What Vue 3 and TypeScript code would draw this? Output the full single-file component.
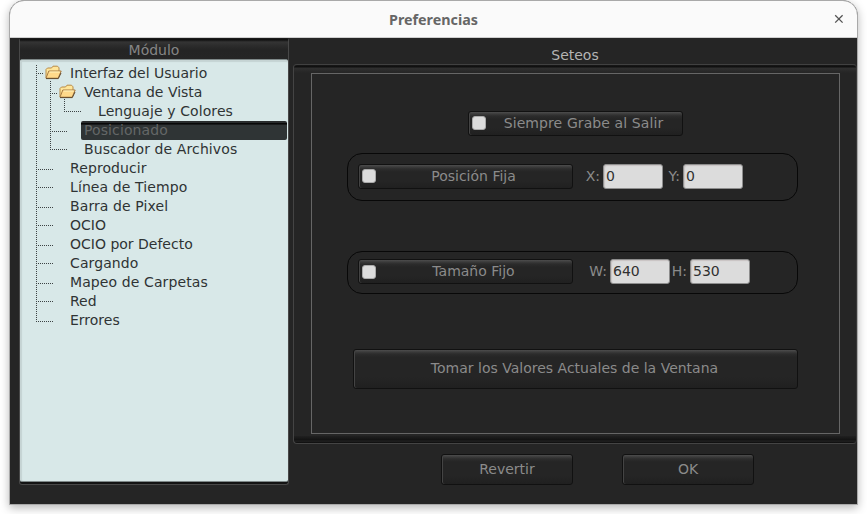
<script setup lang="ts">
interface TreeItem {
  label: string
  level: number
  folder?: boolean
  selected?: boolean
  wide?: boolean
}

const items: TreeItem[] = [
  { label: 'Interfaz del Usuario', level: 0, folder: true },
  { label: 'Ventana de Vista', level: 1, folder: true },
  { label: 'Lenguaje y Colores', level: 2, wide: true },
  { label: 'Posicionado', level: 1, selected: true, wide: true },
  { label: 'Buscador de Archivos', level: 1, wide: true },
  { label: 'Reproducir', level: 0, wide: true },
  { label: 'Línea de Tiempo', level: 0, wide: true },
  { label: 'Barra de Pixel', level: 0, wide: true },
  { label: 'OCIO', level: 0 },
  { label: 'OCIO por Defecto', level: 0 },
  { label: 'Cargando', level: 0, wide: true },
  { label: 'Mapeo de Carpetas', level: 0, wide: true },
  { label: 'Red', level: 0 },
  { label: 'Errores', level: 0 },
]

// Dotted connectors: one stub per row, plus one trunk per nesting level.
const stubs = items.map((item, i) => {
  const y = 13 + 19 * i + (i === 2 || i === 4 ? 0 : i % 2)
  return `M${16 + item.level * 14} ${y + 0.5}h${item.folder ? 8 : 18}`
})
const lines = ['M16.5 5v257', 'M30.5 21v69', 'M44.5 39v13', ...stubs].join('')

const groups = [
  { id: 'pos', title: 'Posición Fija', fields: [{ k: 'X:', v: '0' }, { k: 'Y:', v: '0' }] },
  { id: 'size', title: 'Tamaño Fijo', fields: [{ k: 'W:', v: '640' }, { k: 'H:', v: '530' }] },
]
</script>

<template>
  <div class="window">
    <header class="titlebar">
      <span class="title">Preferencias</span>
      <svg class="close" width="10" height="10" viewBox="0 0 10 10"><path d="M1.2 1.2 8.6 8.6M8.6 1.2 1.2 8.6" /></svg>
    </header>
    <main class="body">
      <aside class="side">
        <div class="side-head">Módulo</div>
        <div class="tree">
          <svg class="lines" width="100" height="270"><path :d="lines" /></svg>
          <div v-for="item in items" :key="item.label" class="row" :class="['l' + item.level, { selected: item.selected, wide: item.wide }]">
            <span class="slot">
              <svg v-if="item.folder" width="17" height="15" viewBox="0 0 17 15">
                <path d="M1 13V4.5L2.5 3h4L8 1.2h4.5L14 2.8V6" fill="#ffe69a" stroke="#b98a45" />
                <path d="M1 13.2 3.8 6H16.2L13.2 13.2z" fill="#ffd98a" stroke="#a87a42" />
                <path d="M4.5 7H14.7" stroke="#fff3bd" />
                <path d="M1 13.6H13.3L16 8" fill="none" stroke="#60482b" />
              </svg>
            </span>
            <span class="name">{{ item.label }}</span>
          </div>
        </div>
      </aside>
      <section class="content">
        <div class="heading">Seteos</div>
        <div class="panel">
          <div class="inner">
            <button class="btn check save"><i class="box"></i><span>Siempre Grabe al Salir</span></button>
            <div v-for="g in groups" :key="g.id" class="group" :class="g.id">
              <button class="btn check"><i class="box"></i><span>{{ g.title }}</span></button>
              <label v-for="f in g.fields" :key="f.k" class="field"><span>{{ f.k }}</span><input :value="f.v" /></label>
            </div>
            <button class="btn take">Tomar los Valores Actuales de la Ventana</button>
          </div>
        </div>
        <footer class="actions">
          <button class="btn">Revertir</button>
          <button class="btn">OK</button>
        </footer>
      </section>
    </main>
  </div>
</template>

<style>
html { background: #fff; }
body { margin: 0; height: 514px; overflow: hidden; }
</style>

<style scoped>
* { box-sizing: border-box; }
.window {
  width: 849px; height: 505px; margin-left: 9px;
  border: 1px solid #a9a9a9; border-radius: 15px 15px 0 0;
  background: #252525; overflow: hidden;
  box-shadow: 0 3px 10px rgba(0, 0, 0, .28);
  font: 14px/19px "DejaVu Sans", sans-serif; color: #8b8b8b;
}
.titlebar {
  height: 37px; background: #fafafa; border-bottom: 1px solid #cfcfcf;
  display: grid; grid-template-columns: 1fr auto 1fr; align-items: center;
}
.title { grid-column: 2; font: bold 14.3px/18px "Noto Sans", sans-serif; color: #666; padding-top: 1px; }
.close { justify-self: end; margin-right: 13px; fill: none; stroke: #555; stroke-width: 1.3; }
.body { display: flex; height: 466px; }
.side { width: 270px; height: 447px; margin-left: 9px; flex: none; border: 1px solid #484848; border-top-color: #1a1a1a; border-radius: 3px; background: #131313; }
.side-head {
  height: 20px; text-align: center; line-height: 20px; color: #858585;
  border-top: 1px solid #101010;
  background: linear-gradient(#131313, #343434 2px, #2b2b2b 6px, #242424 10px, #252525);
}
.tree {
  position: relative; height: 423px; padding-top: 4px;
  background: #d8e8e8; border: 1px solid #7e8888; border-width: 1px 0; border-radius: 2px;
  box-shadow: inset 0 2px 1px #c5d3d3, inset 2px 0 1px #c5d3d3;
  color: #2f3334;
}
.lines { position: absolute; left: 0; top: 0; fill: none; stroke: #3c4243; stroke-dasharray: 1 1; }
.lines path { shape-rendering: crispEdges; }
.row { position: relative; display: flex; height: 19px; line-height: 18px; white-space: nowrap; }
.wide { letter-spacing: .1px; }
.slot { width: 24px; margin-left: 25px; height: 19px; flex: none; }
.l1 .slot { margin-left: 39px; }
.l2 .slot { margin-left: 53px; }
.l1 .slot, .l2 .slot { width: 22px; }
.slot svg { display: block; margin-top: 1px; fill: none; }
.name { padding-left: 3px; }
.l0 .name { padding-left: 1px; }
.selected .name {
  flex: 1; margin-right: 1px; color: #646767; border-radius: 2px;
  background: linear-gradient(#292c2d 0 2px, #080808 2px 3px, #181a1b 3px 4px, #2f3435 4px);
}
.content { flex: 1; margin-left: 4px; }
.heading { height: 26px; line-height: 34px; text-align: center; color: #b4b4b4; }
.panel {
  height: 380px; padding: 8px 16px 8px 17px;
  border: 1px solid #444; border-right-color: #383838; border-top-color: #414141; border-radius: 4px;
  background:
    linear-gradient(#191919, #0e0e0e 2px, #303030 3px, #252525 8px) top / 100% 8px no-repeat,
    linear-gradient(#202020, #121212 4px, #222 5px, #0c0c0c 7px) bottom / 100% 7px no-repeat;
}
.inner { height: 361px; border: 1px solid #666; padding: 37px 40px 0 35px; }
.btn {
  display: block; padding: 0; border: 1px solid #111; border-radius: 3px; color: #8b8b8b;
  font: inherit; text-align: center;
  background: linear-gradient(#4d4d4d, #3a3a3a 2px, #2c2c2c 4px, #252525 7px, #252525 70%, #202020);
  box-shadow: inset 1px 0 0 #444;
}
.check { width: 215px; height: 25px; display: flex; align-items: center; padding-left: 3px; flex: none; }
.check span { flex: 1; padding-right: 1px; }
.box { width: 14px; height: 14px; background: #dcdcdc; border: 1px solid #aaa; border-radius: 3px; }
.save { margin-left: 121px; letter-spacing: .1px; }
.save .box, .pos .box { margin-bottom: 1px; }
.group { display: flex; align-items: center; width: 451px; border: 1px solid #080808; border-radius: 15px; padding-left: 10px; }
.pos { height: 48px; margin-top: 17px; padding-bottom: 2px; }
.size { height: 43px; margin-top: 50px; padding-bottom: 2px; }
.field { display: flex; align-items: center; justify-content: flex-end; width: 80px; }
.field:nth-of-type(1) { width: 90px; }
.size .field:nth-of-type(1) { width: 97px; }
.field span { margin-right: 3px; }
input {
  width: 60px; height: 25px; padding: 0 0 1px 2px; flex: none;
  border: 1px solid #8d8d8d; border-radius: 3px; background: #dcdcdc; color: #303030; font: inherit;
  box-shadow: inset 1px 1px 1px #c8c3c3;
}
.take { width: 445px; height: 40px; margin: 55px 0 0 6px; padding: 0 2px 2px 0; }
.actions { display: flex; gap: 49px; padding: 10px 0 0 148px; }
.actions .btn { width: 132px; height: 31px; }
</style>
